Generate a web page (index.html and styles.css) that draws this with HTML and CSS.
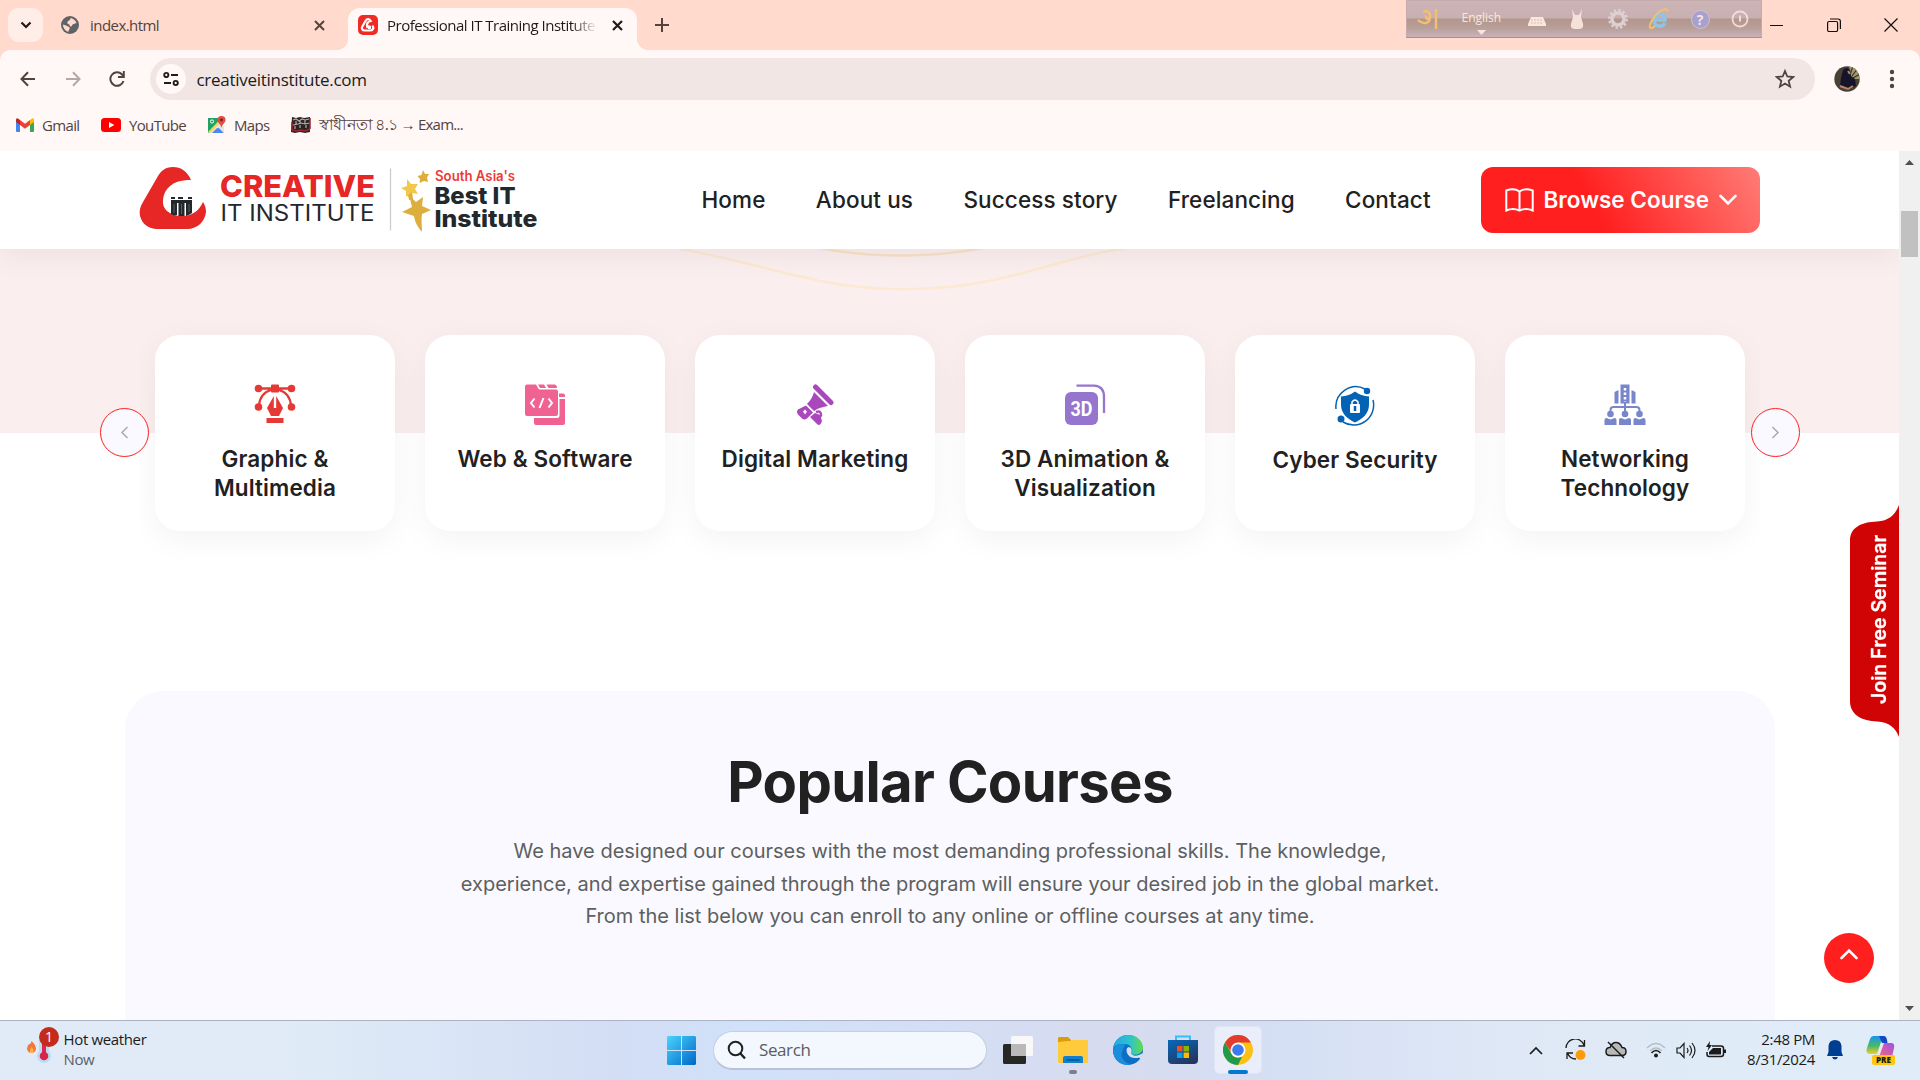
FILE: index.html
```html
<!DOCTYPE html>
<html lang="en">
<head>
<meta charset="utf-8">
<title>Professional IT Training Institute</title>
<link rel="stylesheet" href="styles.css">
</head>
<body>
<div class="screen">
  <div class="tabstrip">
    <div class="tab-search"><svg width="12" height="8" viewBox="0 0 12 8"><path d="M1.500 1.500 6 6l4.500-4.500" fill="none" stroke="#201a19" stroke-width="2.200"/></svg></div>
    <div class="tab">
      <svg width="18" height="18" viewBox="0 0 18 18"><circle cx="9" cy="9" r="9" fill="#5f6368"/><path d="M9.500 2c2 .5 5 2 6 5-2 1-4 .5-4.500 2.500s-2 1-2.500-.5-3-1-2-3 3-1.500 3-4z" fill="#ffdacd"/><path d="M2 8.500c2 .5 4 1.500 6 2.500 2 1.200-.5 2.500-.5 4.800C4.500 15 2 12.500 2 8.500z" fill="#ffdacd"/></svg>
      <span class="tab-title">index.html</span>
      <svg class="x" width="11" height="11" viewBox="0 0 11 11"><path d="M1 1l9 9M10 1l-9 9" stroke="#53433e" stroke-width="2"/></svg>
    </div>
    <div class="tab active">
      <svg width="20" height="20" viewBox="0 0 20 20"><rect width="20" height="20" rx="5" fill="#f02b26"/><path d="M14.500 10.500c2 3-.2 5-2.500 5H7c-3 0-3.800-2-2.500-4.200L7.500 6c1.500-2.500 4-2.500 5.200 0-3 .5-5 3.500-3.200 7" fill="none" stroke="#fff" stroke-width="2.200"/><path d="M10 10v4h3v-3z" fill="#fff"/></svg>
      <span class="tab-title">Professional IT Training Institute</span>
      <svg class="x" width="11" height="11" viewBox="0 0 11 11"><path d="M1 1l9 9M10 1l-9 9" stroke="#201a19" stroke-width="2.200"/></svg>
    </div>
    <svg class="plus" width="14" height="14" viewBox="0 0 14 14"><path d="M7 0v14M0 7h14" stroke="#53433e" stroke-width="2"/></svg>
    <div class="ime">
      <svg width="24" height="22" viewBox="0 0 24 22"><path d="M6 4c4-2 8 1 7 5-1 3-5 2-4-1M13 9c0 7-7 8-12 3M19 1v20" fill="none" stroke="#f5c06b" stroke-width="2.400"/></svg>
      <div class="ime-lang"><span>English</span><svg width="9" height="5" viewBox="0 0 9 5"><path d="M0 0h9L4.500 5z" fill="#fbe6dd"/></svg></div>
      <svg width="20" height="20" viewBox="0 0 20 20"><path d="M4 8h12l3 7v2H1v-2z" fill="#fbe6dd"/><path d="M4 11h12M4 14h12" stroke="#d6beb6" stroke-dasharray="2 1"/></svg>
      <svg width="20" height="22" viewBox="0 0 20 22"><path d="M5 1l3 6h4l3-6-1 8 2 7c1 5-3 5-6 5s-7 0-6-5l2-7z" fill="#f6e1da"/></svg>
      <svg width="20" height="20" viewBox="0 0 20 20"><circle cx="10" cy="10" r="6" fill="none" stroke="#ddcfd2" stroke-width="3.500"/><circle cx="10" cy="10" r="8.700" fill="none" stroke="#ddcfd2" stroke-width="2.500" stroke-dasharray="2.500 2.050"/></svg>
      <svg width="22" height="22" viewBox="0 0 22 22"><path d="M6 12h11c0-8-10-8-11 0 0 7 8 8 11 3" fill="none" stroke="#8cc5e6" stroke-width="3.500"/><path d="M20 3c-2-4-9 0-13 5S0 20 3 20c2 0 3-1 4-2" fill="none" stroke="#f2c06d" stroke-width="2"/></svg>
      <div class="ime-help">?</div>
      <svg width="20" height="20" viewBox="0 0 20 20"><circle cx="10" cy="10" r="7.500" fill="none" stroke="#f3ded7" stroke-width="1.800"/><path d="M10 6.500v6" stroke="#f3ded7" stroke-width="2"/></svg>
    </div>
    <div class="win">
      <svg width="14" height="14" viewBox="0 0 14 14"><path d="M0 7.500h13" stroke="#111"/></svg>
      <svg width="14" height="14" viewBox="0 0 14 14"><rect x=".6" y="3.500" width="10" height="10" rx="1.500" fill="none" stroke="#111" stroke-width="1.200"/><path d="M3 1h8q2.400 0 2.400 2.400V11" fill="none" stroke="#111" stroke-width="1.200"/></svg>
      <svg width="14" height="14" viewBox="0 0 14 14"><path d="M.5.5l13 13M13.500.5l-13 13" stroke="#111" stroke-width="1.200"/></svg>
    </div>
  </div>

  <div class="chrome-body">
  <div class="toolbar">
    <svg width="16" height="16" viewBox="0 0 16 16"><path d="M15 8H2M8 1.200 1.500 8 8 14.800" fill="none" stroke="#53433e" stroke-width="2"/></svg>
    <svg width="16" height="16" viewBox="0 0 16 16"><path d="M1 8h13M8 1.200 14.500 8 8 14.800" fill="none" stroke="#b5a8a5" stroke-width="2"/></svg>
    <svg width="16" height="16" viewBox="0 0 16 16"><path d="M14.500 10A6.700 6.700 0 1 1 13 3.500l1.500 2M14.800 0v6H9" fill="none" stroke="#53433e" stroke-width="2"/></svg>
    <div class="omnibox">
      <div class="chip"><svg width="16" height="16" viewBox="0 0 16 16"><path d="M8 4h7M1 12h7" stroke="#201a19" stroke-width="2"/><circle cx="3.300" cy="4" r="2.100" fill="none" stroke="#201a19" stroke-width="1.900"/><circle cx="12.700" cy="12" r="2.100" fill="none" stroke="#201a19" stroke-width="1.900"/></svg></div>
      <span class="url">creativeitinstitute.com</span>
      <svg class="star" width="20" height="20" viewBox="0 0 20 20"><path d="M10 2l2.300 5.500 5.900.5-4.500 3.900 1.400 5.800L10 14.600l-5.100 3.100 1.400-5.800L1.800 8l5.900-.5z" fill="none" stroke="#53433e" stroke-width="1.800"/></svg>
    </div>
    <svg class="avatar" width="26" height="26" viewBox="0 0 26 26"><defs><clipPath id="av"><circle cx="13" cy="13" r="12.700"/></clipPath></defs><g clip-path="url(#av)"><path d="M0 0h26v26H0z" fill="#4b4036"/><path d="M15 0h11v13H17z" fill="#a0966c"/><path d="M16 9l3-9M18 10l6-8M19 12l7-4" stroke="#3c3429" stroke-width="1.200"/><path d="M9 4q4-4 7 0l1 6 4 3 1 7-8 4-8-4 1-8z" fill="#15142a"/><path d="M6 20l8 3 5-3M14 5l2 3" stroke="#b98567" stroke-width="2" fill="none"/></g></svg>
    <svg class="dots" width="6" height="20" viewBox="0 0 6 20"><g fill="#53433e"><circle cx="3" cy="3" r="2.200"/><circle cx="3" cy="10" r="2.200"/><circle cx="3" cy="17" r="2.200"/></g></svg>
  </div>
  <div class="bookmarks">
    <div class="bm bm-gmail"><svg width="18" height="14" viewBox="0 0 18 14"><path d="M0 2v11q0 1 1 1h3V6z" fill="#4285f4"/><path d="M18 2v11q0 1-1 1h-3V6z" fill="#34a853"/><path d="M14 2l2-1.500Q18-.4 18 2v2l-4 3z" fill="#fbbc04"/><path d="M4 2 2 .5Q0-.4 0 2v2l4 3z" fill="#c5221f"/><path d="M4 2l5 3.700L14 2v5l-5 3.800L4 7z" fill="#ea4335"/></svg><span>Gmail</span></div>
    <div class="bm bm-yt"><svg width="20" height="14" viewBox="0 0 20 14"><rect width="20" height="14" rx="3.500" fill="#f00"/><path d="M8 4l5.300 3L8 10z" fill="#fff"/></svg><span>YouTube</span></div>
    <div class="bm bm-maps"><svg width="18" height="18" viewBox="0 0 18 18"><path d="M0 2h13v5L2 17H0z" fill="#1ea362"/><path d="M2 17l7-7 7 7z" fill="#4a89f3"/><path d="M0 17 11 6l5 5v6l-5-6-6 6z" fill="#e8e4dc"/><path d="M1 16.500 12 5" stroke="#fdd24a" stroke-width="2.200"/><path d="M4 17l5-5 5 5z" fill="#4a89f3"/><path d="M13.500 0a4 4 0 0 1 4 4c0 3-3.500 4-4 8-.5-4-4-5-4-8a4 4 0 0 1 4-4z" fill="#e14e42"/><circle cx="13.500" cy="4" r="1.400" fill="#7d1f19"/><circle cx="4" cy="5.500" r="1.600" fill="none" stroke="#fff"/></svg><span>Maps</span></div>
    <div class="bm bm-exam"><svg width="20" height="18" viewBox="0 0 20 18"><path d="M1 1l4 1 4-1 4 1 6-1v15l-5 1-5-1-5 1-4-1z" fill="#292526"/><path d="M2 4l3-1 3 2 3-2 3 1 4-1M5 5v3M9 5v3M14 4v4M2 9l5-1 3-1 4 1 5-1M4 10v3M9 9v3M15 9v3" stroke="#b9aaa6" stroke-width="1.200" fill="none"/><path d="M1 14l5 1 4-1 4 1 5-2M19 2v11M1 6v8" stroke="#9f2430" stroke-width="1.500" fill="none"/></svg><span lang="bn"><span class="bn">স্বাধীনতা ৪.১</span> → Exam...</span></div>
  </div>
  </div>

  <div class="viewport">
    <div class="page">
      <header class="header">
        <svg class="logo" width="402" height="66" viewBox="139 167 402 66">
          <path d="M191 180C187 171 181 167 173 167c-8 0-12 4-15 9l-15 26c-3 5-4 9-3 14 2 8 9 13 17 13h30c11 0 18-8 19-17 0-4-1-7-3-10-4 9-12 15-23 14-11-1-18-7-17-16 1-12 10-19 24-20z" fill="#e62726"/>
          <g fill="#23282d"><path d="M171 203h6v12q-3 1-6-1zM178.500 200h6v16h-6zM186 203h6v10q-3 2-6 3zM171 200h21v3h-21zM171 197h4v2h-4zM178 197h5v2h-5zM188 197h4v2h-4z"/></g><path d="M174 204v9M181.500 204v10M189 204v8" stroke="#777" stroke-width=".7"/>
          <text x="220" y="196.500" class="lg-creative" textLength="155" lengthAdjust="spacingAndGlyphs">CREATIVE</text>
          <text x="220.500" y="221" class="lg-it" textLength="154" lengthAdjust="spacingAndGlyphs">IT INSTITUTE</text>
          <path d="M390.500 168.500v62" stroke="#ccc" stroke-width="1.300"/>
          <g fill="#deae3c"><path d="M423 170l2 4h4l-2 3.500 1 4.500-4-1-4.500 2 .5-4-2.500-3 4-1z"/><path d="M407 179l4 5 7 0-3 5 3 5-6-1-6 4 0-6-5-3 6-2z" fill="#f2c84b"/><path d="M412 192l-4 3 1 5 4-1z"/><path d="M409 195l7 7 7-5-1 9 9 4-9 4c-1 6 0 11 0 18-4-5-7-9-8-16l-12-4 10-5z"/></g>
          <text x="435" y="181" class="lg-south" textLength="80" lengthAdjust="spacingAndGlyphs">South Asia's</text>
          <text x="434.500" y="203.500" class="lg-best" textLength="81" lengthAdjust="spacingAndGlyphs">Best IT</text>
          <text x="434.500" y="227" class="lg-best" textLength="103" lengthAdjust="spacingAndGlyphs">Institute</text>
        </svg>
        <nav class="nav"><a>Home</a><a>About us</a><a>Success story</a><a>Freelancing</a><a>Contact</a></nav>
        <div class="browse">
          <svg width="29" height="24" viewBox="0 0 29 24"><path d="M14.500 3.500v19M14.500 3.500C11 1 6 .8 1.300 2.500v20c4.500-2 9.700-1.500 13.200 0 3.500-1.500 8.700-2 13.200 0v-20C23 .8 18 1 14.500 3.500z" fill="none" stroke="#fff" stroke-width="2"/></svg>
          <span>Browse Course</span>
          <svg width="18" height="12" viewBox="0 0 18 12"><path d="M1.500 1.800 9 9.300l7.500-7.500" fill="none" stroke="#fff" stroke-width="2.600" stroke-linecap="round"/></svg>
        </div>
      </header>

      <section class="hero">
        <svg class="waves" width="460" height="48" viewBox="0 0 460 48"><path d="M-4-1C60 11 100 24 146 33c50 10 115 10 172-3C362 20 400 6 446-1" fill="none" stroke="#fce8d3" stroke-width="2.500"/><path d="M140-1c50 10 112 10 162 0" fill="none" stroke="#f8e1c6" stroke-width="2.500"/></svg>
      </section>

      <div class="carousel">
        <div class="arrow"><svg width="9" height="13" viewBox="0 0 9 13"><path d="M7.500 1 2 6.500 7.500 12" fill="none" stroke="#aaa9ae" stroke-width="1.500"/></svg></div>
        <div class="track">
          <div class="card"><svg width="42" height="42" viewBox="0 0 42 42"><g fill="#e53935"><circle cx="4.500" cy="4.500" r="3.800"/><circle cx="37.500" cy="4.500" r="3.800"/><circle cx="4.500" cy="23" r="3.800"/><circle cx="37.500" cy="23" r="3.800"/><rect x="17" y=".5" width="8" height="8" rx="1"/><path d="M19.800 12 13 24l4 8h8l4-8-6.800-12v12h-2.400zM12.500 34h17v5h-17z"/></g><path d="M4 4.500h34M17 6C10 8 5.500 14 5 22M25 6c7 2 11.500 8 12 16" fill="none" stroke="#e53935" stroke-width="2.300"/></svg><h3>Graphic &amp;<br>Multimedia</h3></div>
          <div class="card"><svg width="42" height="42" viewBox="0 0 42 42"><g fill="#f06292"><path d="M3 .5h9l3 5h17q2 0 2 2V30q0 2-2 2H3q-2 0-2-2V2.500Q1 .5 3 .5zM14 .5h6l2 3.500h-6zM22.500.5h8Q33 .5 33 4h-8.500zM35 9.500h4q2 0 2 2V13h-6zM35.500 15H41v24q0 2-2 2H12q-2 0-2-2v-5h23q2.500 0 2.500-2.500z"/></g><path d="M10.500 14.500 7 19l3.500 4.500M24.500 14.500 28 19l-3.500 4.500M19.500 14l-4 10" fill="none" stroke="#fff" stroke-width="2"/></svg><h3>Web &amp; Software</h3></div>
          <div class="card"><svg width="42" height="42" viewBox="0 0 42 42"><g fill="#ab47bc"><path d="M20 8l14 14c-5 1-10 2-14 5l-7-7c4-4 6-8 7-12zM12 21.500l7 7-6 6q-3 2-5 0l-4-4q-2-3 0-5z"/><path d="M21 29l5 2 2 6q-2 6-5 3l-7-7z"/></g><path d="M21.500 3 37 18.500" stroke="#ab47bc" stroke-width="5" stroke-linecap="round"/><path d="M22 28q5-2 5 3-1 3-4 3" stroke="#ab47bc" stroke-width="2.500" fill="none"/><path d="M9 27.500l2-2 2 2-2 3z" fill="#fff"/></svg><h3>Digital Marketing</h3></div>
          <div class="card"><svg width="42" height="42" viewBox="0 0 42 42"><rect x="1" y="8" width="33" height="33" rx="6" fill="#9575cd"/><path d="M12.500 1.700H30Q40 2 40 13v16" fill="none" stroke="#9575cd" stroke-width="2.300"/><text x="6.500" y="32" class="ico-3d" textLength="22" lengthAdjust="spacingAndGlyphs">3D</text></svg><h3>3D Animation &amp;<br>Visualization</h3></div>
          <div class="card cyber"><svg width="42" height="42" viewBox="0 0 42 42"><path d="M21 6.500q6 4.500 14 5v8c0 9-6 14-14 18C13 33.500 7 28.500 7 19.500v-8q8-.5 14-5z" fill="#0362b3"/><g fill="#0362b3"><circle cx="33" cy="6" r="3.200"/><circle cx="7" cy="34" r="3.500"/></g><path d="M2 24A20 20 0 0 1 31 4M39 15a20 20 0 0 1-30 22" fill="none" stroke="#0362b3" stroke-width="1.500"/><rect x="16" y="19" width="10" height="9" rx="1" fill="#fff"/><path d="M18 19v-2q3-4 6 0v2" fill="none" stroke="#fff" stroke-width="1.500"/><path d="M21 21v5" stroke="#0362b3" stroke-width="2.500"/></svg><h3>Cyber Security</h3></div>
          <div class="card"><svg width="42" height="42" viewBox="0 0 42 42"><g fill="#7986cb"><path d="M16.500.5h9v19h-9zM10.500 8l4-2v13.500h-4zM27.500 6l4 2v11.500h-4z"/><circle cx="6.500" cy="30" r="3.300"/><circle cx="21" cy="30" r="3.300"/><circle cx="35.500" cy="30" r="3.300"/><path d="M.5 36q0-2 2-2l4 1.500 4-1.500q2 0 2 2v5H.5zM15 36q0-2 2-2l4 1.500 4-1.500q2 0 2 2v5H15zM29.500 36q0-2 2-2l4 1.500 4-1.500q2 0 2 2v5h-12z"/></g><path d="M21 19v9M6.500 28v-2q0-3 3-3h23q3 0 3 3v2" fill="none" stroke="#7986cb" stroke-width="2"/><path d="M21 4v14" stroke="#fff" stroke-width="2.500" stroke-dasharray="2.500 2"/></svg><h3>Networking<br>Technology</h3></div>
        </div>
        <div class="arrow"><svg width="9" height="13" viewBox="0 0 9 13"><path d="M1.500 1 7 6.500 1.500 12" fill="none" stroke="#aaa9ae" stroke-width="1.500"/></svg></div>
      </div>

      <section class="popular">
        <h2>Popular Courses</h2>
        <p>We have designed our courses with the most demanding professional skills. The knowledge,<br>experience, and expertise gained through the program will ensure your desired job in the global market.<br>From the list below you can enroll to any online or offline courses at any time.</p>
      </section>

      <div class="seminar">
        <svg width="49" height="232" viewBox="0 0 49 232"><path d="M49 0v232c-3-8-9-15-22-15.500C12 216 0 210 0 196V36C0 22 12 17 27 16.500 40 16 46 8 49 0z" fill="#d00404"/></svg>
        <span>Join Free Seminar</span>
      </div>
      <div class="to-top"><svg width="18" height="12" viewBox="0 0 18 12"><path d="M1.500 10 9 2.500l7.500 7.500" fill="none" stroke="#fff" stroke-width="2.600" stroke-linecap="round"/></svg></div>
    </div>
    <div class="scrollbar">
      <svg width="9" height="5" viewBox="0 0 9 5"><path d="M0 5h9L4.500 0z" fill="#505050"/></svg>
      <div class="thumb"></div>
      <svg class="down" width="9" height="5" viewBox="0 0 9 5"><path d="M0 0h9L4.500 5z" fill="#505050"/></svg>
    </div>
  </div>

  <div class="taskbar">
    <div class="weather">
      <div class="weather-ico">
        <svg width="26" height="42" viewBox="0 0 26 42"><path d="M4.500 18c3 3 4.500 5 4.500 8q-1 4-4.500 4T0 26q0-3 2-5 2 1 2.500-3z" fill="#f4763b"/><path d="M4.500 24q3 3 1.500 6H3q-1-3 1.500-6z" fill="#fdb04c"/><path d="M17 20v12" stroke="#bcdcf1" stroke-width="10" stroke-linecap="round"/><circle cx="17" cy="33" r="7" fill="#bcdcf1"/><path d="M17 18v14" stroke="#e0264c" stroke-width="4"/><circle cx="17" cy="33" r="4.300" fill="#d9244a"/></svg>
        <b class="badge">1</b>
      </div>
      <div class="two"><span class="w1">Hot weather</span><span class="w2">Now</span></div>
    </div>
    <div class="dock">
      <svg class="start" width="29" height="29" viewBox="0 0 29 29"><defs><linearGradient id="w" x1="0" y1="0" x2="1" y2="1"><stop offset="0" stop-color="#4ad4fd"/><stop offset="1" stop-color="#0067c8"/></linearGradient></defs><path d="M1 0h13v14H0V1zM15 0h13l1 1v13H15zM0 15h14v14H1l-1-1zM15 15h14v13l-1 1H15z" fill="url(#w)"/></svg>
      <div class="search"><svg width="20" height="20" viewBox="0 0 20 20"><circle cx="8.500" cy="8.500" r="6.800" fill="none" stroke="#222" stroke-width="2"/><path d="M13.200 13.200 18 18.500" stroke="#222" stroke-width="2.400"/></svg><span>Search</span></div>
      <svg class="tview" width="30" height="29" viewBox="0 0 30 29"><rect y="8" width="23" height="20" rx="1.500" fill="#272725"/><rect x="8" y="0" width="22" height="20" rx="1.500" fill="#f8f8f8"/><path d="M8 8h15v12H9q-1 0-1-1z" fill="#b9b9b9"/></svg>
      <svg class="files" width="30" height="28" viewBox="0 0 30 28"><path d="M1 1h9l3 3v6H0V2z" fill="#dc9c0a"/><path d="M10 5h3l1-1h15l1 1v21q0 1-1 1H1q-1 0-1-1V6z" fill="#ffcb3d"/><path d="M5 27v-5q0-2 2-2h16q2 0 2 2v5z" fill="#1180d0"/><path d="M8.500 24h13" stroke="#0b4f8d" stroke-width="1.500"/></svg>
      <svg class="edge" width="30" height="30" viewBox="0 0 30 30"><defs><linearGradient id="e1" x1="0" x2="1"><stop offset="0" stop-color="#22a7e4"/><stop offset=".55" stop-color="#2bc3cf"/><stop offset="1" stop-color="#64db49"/></linearGradient></defs><circle cx="15" cy="15" r="15" fill="#0c6fc5"/><path d="M0 14C1 5 8 0 15 0c9 0 15 6 15 13 0 6-9 9-12 5 2-3 0-9-6-9S1 10 0 14z" fill="url(#e1)"/><path d="M10 15c-4 6 1 14 9 14-7 3-19-1-19-14 2-6 9-7 13-5-2 1-3 3-3 5z" fill="#1b8edb"/><path d="M16 12c3 1 3 4 2 6 2 4 7 3 12 0l-2 6c-2-2-3-1-5-1-6 1-11-5-9-10z" fill="#d6dff4"/></svg>
      <svg class="store" width="30" height="30" viewBox="0 0 30 30"><defs><linearGradient id="s" x1="0" y1="0" x2=".6" y2="1"><stop offset="0" stop-color="#0669bb"/><stop offset="1" stop-color="#263660"/></linearGradient></defs><path d="M8 6V1.500h14V6" fill="none" stroke="#38c0f5" stroke-width="2"/><path d="M0 5h30v20q0 4-4 4H4q-4 0-4-4z" fill="url(#s)"/><path d="M9 11h5.500v5.500H9z" fill="#f25022"/><path d="M15.500 11H21v5.500h-5.500z" fill="#7fba00"/><path d="M9 17.500h5.500V23H9z" fill="#00a4ef"/><path d="M15.500 17.500H21V23h-5.500z" fill="#ffb900"/></svg>
      <div class="chrome-app"><svg width="30" height="30" viewBox="0 0 30 30"><circle cx="15" cy="15" r="15" fill="#fbc116"/><path d="M2 7.500A15 15 0 0 1 28 7.500H15L9 18.500z" fill="#e33b2e"/><path d="M2 7.500 8.500 19q2.500 4 6.500 3.500l4-.5L15 30A15 15 0 0 1 2 7.500z" fill="#219a4a"/><circle cx="15" cy="15" r="7.500" fill="#fff"/><circle cx="15" cy="15" r="5.800" fill="#3a7cec"/></svg></div>
    </div>
    <div class="tray">
      <svg width="14" height="9" viewBox="0 0 14 9"><path d="M1 8l6-6 6 6" fill="none" stroke="#1b1b1b" stroke-width="1.700"/></svg>
      <svg class="sync" width="22" height="22" viewBox="0 0 22 22"><path d="M1 9A9.300 9.300 0 0 1 19 6M19.500 1v6h-6M11 20A9.300 9.300 0 0 1 2.500 14M2 20v-6h6" fill="none" stroke="#1b1b1b" stroke-width="1.300"/><circle cx="15.500" cy="16" r="5" fill="#ff9a0a"/></svg>
      <svg class="cloud" width="22" height="18" viewBox="0 0 22 18"><path d="M5 14.500q-4 0-4-4t4-4Q7 1.500 11 1.500t6 5q4 0 4 4t-4 4z" fill="#b8b8b8" stroke="#1b1b1b" stroke-width="1.500"/><path d="M3 1l16 16" stroke="#1b1b1b" stroke-width="1.500"/></svg>
      <svg class="wifi" width="20" height="16" viewBox="0 0 20 16"><g fill="none"><path d="M1 6q9-9 18 0M4 9q6-6 12 0" stroke="#b4bcc6" stroke-width="1.300"/><path d="M5.500 11q4.500-5 9 0" stroke="#1b1b1b" stroke-width="1.500"/></g><circle cx="10" cy="13.500" r="2" fill="#1b1b1b"/></svg>
      <svg class="vol" width="20" height="17" viewBox="0 0 20 17"><path d="M1 6h3l4-4.500v14L4 11H1zM11 6q2 2.500 0 5M13.500 3.500q4 5 0 10M16 1q6 7.500 0 15" fill="none" stroke="#1b1b1b" stroke-width="1.200"/></svg>
      <svg class="batt" width="20" height="18" viewBox="0 0 20 18"><path d="M6 5h9q2.500 0 2.500 2.500v5.500q0 2.500-2.500 2.500H3Q1 15.500 1 13v-2" fill="none" stroke="#1b1b1b" stroke-width="1.500"/><path d="M7 7h8v6.500H3V11zM18 8.500h2v3.500h-2zM4 0l-4 6h2.500L1.500 10l4.500-6H3.500z" fill="#1b1b1b"/></svg>
      <div class="clock"><span>2:48 PM</span><span>8/31/2024</span></div>
      <svg class="bell" width="16" height="20" viewBox="0 0 16 20"><path d="M8 0q6 0 6.500 6v6l1.500 4H0l1.500-4V6Q2 0 8 0zM5 17h6q-1 2.500-3 2.500T5 17z" fill="#003e92"/></svg>
      <div class="copilot"><svg width="29" height="21" viewBox="0 0 29 21"><defs><linearGradient id="c1" x1="0" y1="0" x2="0" y2="1"><stop offset="0" stop-color="#1597f0"/><stop offset=".55" stop-color="#49b869"/><stop offset="1" stop-color="#f4cf22"/></linearGradient><linearGradient id="c2" x1="1" y1="0" x2="0" y2="1"><stop offset="0" stop-color="#9b51e8"/><stop offset="1" stop-color="#f9667b"/></linearGradient></defs><path d="M8 0h9l-6 18H5q-6 0-4-6L4 3q1-3 4-3z" fill="url(#c1)"/><path d="M13 0h5q2 0 3 4l.5 3H16z" fill="#1546c4"/><path d="M18 7h7q4 0 3 5l-2 9H13z" fill="url(#c2)"/></svg><b class="pre">PRE</b></div>
    </div>
  </div>
</div>
</body>
</html>
```
FILE: styles.css
```css
* { box-sizing: border-box; }
body { margin: 0; background: #fff; }
svg { display: block; flex: none; }
.screen { width: 1920px; height: 1080px; display: flex; flex-direction: column; overflow: hidden; background: #ffdacd; font-family: "Open Sans", "Noto Sans", sans-serif; color: #201a19; }

/* browser tabs */
.tabstrip { height: 50px; flex: none; background: #ffdacd; display: flex; align-items: flex-start; }
.tab-search { width: 35px; height: 34px; margin: 8px 0 0 8px; border-radius: 11px; background: #ffede7; display: flex; align-items: center; justify-content: center; }
.tab { height: 42px; width: 287px; margin-top: 8px; padding: 0 8px 8px 18px; display: flex; align-items: center; font-size: 15px; color: #53433e; }
.tab-title { margin-left: 11px; margin-right: auto; white-space: nowrap; letter-spacing: -0.550px; }
.tab .x { margin-right: 12px; }
.tab:not(.active) { margin-right: 18px; }
.tab:not(.active) .x { margin-right: -3px; }
.tab.active { width: 289px; padding-left: 10px; border-radius: 12px 12px 0 0; background: #fff8f6; color: #201a19; position: relative; }
.tab.active .tab-title { width: 210px; margin-left: 9px; overflow: hidden; letter-spacing: -0.500px; -webkit-mask-image: linear-gradient(to right, #000 88%, transparent); mask-image: linear-gradient(to right, #000 88%, transparent); }
.tab.active .x { margin-right: 6px; }
.tab.active::before, .tab.active::after { content: ""; position: absolute; bottom: 0; width: 12px; height: 12px; }
.tab.active::before { left: -12px; background: radial-gradient(circle at 0 0, transparent 12px, #fff8f6 12.500px); }
.tab.active::after { right: -12px; background: radial-gradient(circle at 100% 0, transparent 12px, #fff8f6 12.500px); }
.plus { margin: 18px 0 0 18px; }
.ime { margin-left: auto; width: 356px; height: 38px; padding: 0 11px 0 10px; display: flex; align-items: center; justify-content: space-between; background: linear-gradient(#cdb4b7, #c8b0b1 47%, #b3968d 50%, #b89f9a 75%, #c9b2ba); border: 1px solid #c5abac; border-bottom-color: #a4908f; }
.ime-lang { display: flex; flex-direction: column; align-items: center; gap: 4px; padding-top: 6px; font: 500 12px/16px "Open Sans", sans-serif; color: #fbe6dd; margin: 0 5px 0 0; }
.ime-help { width: 19px; height: 19px; border-radius: 50%; background: #a8a0cd; border: 1px solid #d3c0cc; color: #f3e4e4; font: 700 14px/17px "Open Sans", sans-serif; text-align: center; }
.win { display: flex; gap: 43px; margin: 18px 22px 0 8px; }

/* toolbar */
.chrome-body { height: 101px; flex: none; background: #fff8f6; border-radius: 10px 10px 0 0; }
.toolbar { height: 50px; padding: 8px 25px 0 20px; display: flex; align-items: center; gap: 28.500px; }
.omnibox { width: 1665px; height: 42px; border-radius: 21px; background: #f2e6e5; display: flex; align-items: center; padding: 0 20px 0 6px; margin-left: -4px; }
.chip { width: 30px; height: 30px; border-radius: 50%; background: #fff8f6; display: flex; align-items: center; justify-content: center; }
.url { margin-left: 11px; font-size: 17px; letter-spacing: -0.280px; }
.star { margin-left: auto; }
.avatar { margin-left: -9px; }
.dots { margin-left: 0; }
.bookmarks { height: 50px; display: flex; align-items: center; padding: 0 0 0 16px; font-size: 15px; letter-spacing: -0.650px; color: #53433e; }
.bm { display: flex; align-items: center; white-space: nowrap; gap: 8px; }
.bm-gmail { width: 85px; }
.bm-yt { width: 107px; }
.bm-maps { width: 83px; }
.bm-exam { gap: 8px; letter-spacing: -0.750px; }
.bn { font-size: 16px; }

/* page */
.viewport { height: 869px; flex: none; display: flex; }
.page { width: 1899px; height: 869px; overflow: hidden; background: #fff; font-family: Inter, sans-serif; color: #212121; position: relative; }
.header { height: 98px; padding: 0 139.500px 0 139px; background: #fff; display: flex; align-items: center; box-shadow: 0 4px 30px rgba(0,0,0,.07); position: relative; z-index: 1; }
.lg-creative { font: 800 30px Inter, sans-serif; fill: #e62726; }
.lg-it { font: 400 22.500px Inter, sans-serif; fill: #23282d; }
.lg-south { font: 600 14px Inter, sans-serif; fill: #ee3a34; }
.lg-best { font: 800 23.500px Inter, sans-serif; fill: #23282d; }
.nav { margin: -1px 0 0 160.500px; display: flex; gap: 50.300px; font-size: 22.500px; font-weight: 500; letter-spacing: 0.120px; white-space: nowrap; }
.browse { margin-left: auto; width: 279px; height: 66px; border-radius: 12px; flex: none; background: linear-gradient(60deg, #ff1f1f 40%, #ff7c76 100%); color: #fff; display: flex; align-items: center; padding-left: 24px; font-size: 22.500px; font-weight: 600; white-space: nowrap; }
.browse span { width: 166px; margin: -1px 9px 0 10px; }
.hero { height: 184px; background: #faefee; }
.waves { margin-left: 680px; }
.carousel { margin: -98px 99px 0 99.500px; display: flex; align-items: flex-start; position: relative; }
.arrow { width: 49px; height: 49px; flex: none; margin-top: 73px; border: 1.500px solid #ff1f1f; border-radius: 50%; background: #f9f9ff; display: flex; align-items: center; justify-content: center; position: relative; z-index: 1; }
.track { width: 1620px; height: 260px; flex: none; margin: -30px -9px 0 -8.500px; padding: 30px 15px 0; overflow: hidden; display: flex; gap: 30px; }
.card { width: 240px; height: 196px; border-radius: 25px; background: #fff; box-shadow: 0 8px 32px rgba(0,0,0,.05); padding-top: 49px; display: flex; flex-direction: column; align-items: center; position: relative; }
.card h3 { margin: 18px 0 0; font-size: 22.500px; line-height: 29px; font-weight: 600; letter-spacing: 0.120px; text-align: center; white-space: nowrap; }
.cyber { padding-top: 50px; }
.cyber h3 { margin-top: 18px; }
.ico-3d { font: 700 20px Roboto, sans-serif; fill: #fff; }
.popular { margin: 126px 124px 0 125px; height: 400px; border-radius: 38px; background: #faf9ff; text-align: center; padding-top: 57px; }
.popular h2 { margin: 0; font-size: 56.250px; line-height: 68px; font-weight: 700; letter-spacing: -0.680px; }
.popular p { margin: 19px 0 0; font-size: 20px; line-height: 32.500px; color: #5c6060; }
.seminar { position: absolute; right: 0; top: 354px; width: 49px; height: 232px; }
.seminar span { position: absolute; left: 17px; top: 28px; height: 172px; writing-mode: vertical-rl; transform: rotate(180deg); font-size: 19.500px; line-height: 24px; font-weight: 600; color: #fff; text-align: center; white-space: nowrap; -webkit-text-stroke: 0.300px #fff; }
.to-top { position: absolute; left: 1824px; top: 782px; width: 50px; height: 50px; border-radius: 50%; background: #ff1f1f; display: flex; justify-content: center; padding-top: 15px; }
.scrollbar { width: 21px; height: 869px; background: #f0f0f0; display: flex; flex-direction: column; align-items: center; padding: 9px 0 9px; }
.thumb { width: 17px; height: 46px; margin-top: 46px; background: #c1c1c1; }
.down { margin-top: auto; }

/* taskbar */
.taskbar { height: 60px; flex: none; border-top: 1px solid #abb4c2; background: linear-gradient(to right, #e0ebf7 0, #e0ebf7 15%, #d3def5 32%, #d0e1f9 39%, #d5def4 50%, #d7dbef 58%, #d5dff4 66%, #dfe9f6 80%, #e0edf9 100%); display: flex; color: #1b1b1b; }
.weather { width: 667px; display: flex; padding-left: 27px; }
.weather-ico { position: relative; width: 36.500px; height: 50px; padding-top: 2px; }
.badge { position: absolute; left: 12px; top: 6px; width: 20px; height: 20px; border-radius: 50%; background: #c42b1c; color: #fff; font-weight: 400; font-size: 14px; line-height: 20px; text-align: center; }
.two, .clock { display: flex; flex-direction: column; padding-top: 8px; font-size: 15px; line-height: 20px; letter-spacing: -0.350px; white-space: nowrap; }
.w2 { color: #5b6067; }
.dock { display: flex; align-items: center; height: 58px; }
.search { margin: 0 16px 0 17px; width: 274px; height: 39px; border-radius: 20px; border: 1px solid #c3cfe4; border-bottom: 2px solid #b9c3d6; background: #f3f7fe; display: flex; align-items: center; padding-left: 13px; gap: 12px; font-size: 17px; letter-spacing: -0.400px; color: #5b5d61; }
.files { margin-left: 25px; }
.edge { margin-left: 25px; }
.store { margin-left: 25px; }
.chrome-app { margin-left: 16px; width: 48px; height: 48px; border-radius: 5px; border: 1px solid #e0e5f3; background: #eaeefa; display: flex; justify-content: center; padding-top: 8px; position: relative; }
.chrome-app::after { content: ""; position: absolute; left: 13px; top: 43px; width: 20px; height: 4px; border-radius: 2px; background: #0078d4; }
.chrome-app::before { content: ""; position: absolute; left: -146px; top: 43px; width: 8px; height: 4px; border-radius: 2px; background: #7a7f8c; }
.tray { margin-left: auto; height: 58px; padding-right: 25px; display: flex; align-items: center; }
.sync { margin-left: 22px; }
.cloud { margin-left: 18px; }
.wifi { margin-left: 19px; }
.vol { margin-left: 10px; }
.batt { margin-left: 10px; }
.clock { margin-left: 20px; width: 69px; height: 58px; align-items: flex-end; }
.bell { margin-left: 12px; }
.copilot { margin-left: 23px; width: 29px; height: 29px; display: flex; flex-direction: column; align-items: flex-end; }
.pre { margin-top: -2px; width: 23px; height: 10px; background: #ffc60b; border-radius: 2px; font: 800 8px/10px "Open Sans", sans-serif; text-align: center; position: relative; }
```
